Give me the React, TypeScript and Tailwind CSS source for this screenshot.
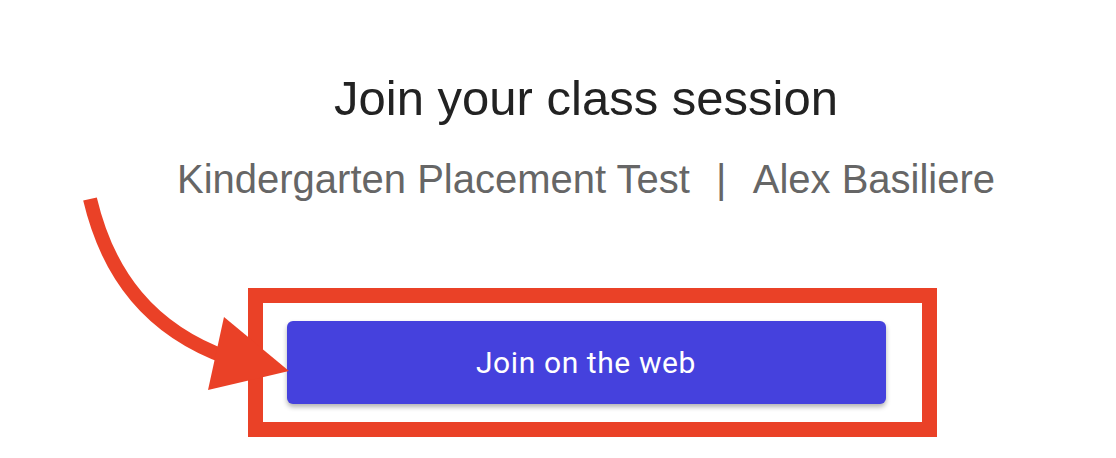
export default function App() {
  return (
    <div className="relative h-[458px] w-[1116px] overflow-hidden bg-white">
      {/* Annotation arrow */}
      <svg
        className="absolute left-0 top-0"
        width="1116"
        height="458"
        viewBox="0 0 1116 458"
        fill="none"
      >
        <path
          d="M90 199 C108 275 150 330 228 358"
          stroke="#EA4127"
          strokeWidth="14"
          fill="none"
        />
        <polygon points="224,317 289,371 208,390" fill="#EA4127" />
      </svg>

      <div className="flex flex-col items-center pl-[56px] pt-[70px]">
        <h1 className="font-['Liberation_Sans',Arial,sans-serif] text-[49px] leading-[56px] text-[#222222]">
          Join your class session
        </h1>
        <p className="mt-[29px] font-['Liberation_Sans',Arial,sans-serif] text-[40px] leading-[48px] text-[#666666]">
          Kindergarten Placement Test
          <span className="mx-[4px]">&nbsp;&nbsp;|&nbsp;&nbsp;</span>
          Alex Basiliere
        </p>

        <div className="mt-[85px] ml-[12px] border-[15px] border-[#EA4127] py-[18px] pl-[24px] pr-[36px]">
          <button className="flex h-[83px] w-[599px] items-center justify-center rounded-[6px] bg-[#4541DD] font-['Roboto',sans-serif] text-[30px] tracking-[0.6px] text-white shadow-[0_3px_5px_rgba(0,0,0,0.3)]">
            Join on the web
          </button>
        </div>
      </div>
    </div>
  );
}
